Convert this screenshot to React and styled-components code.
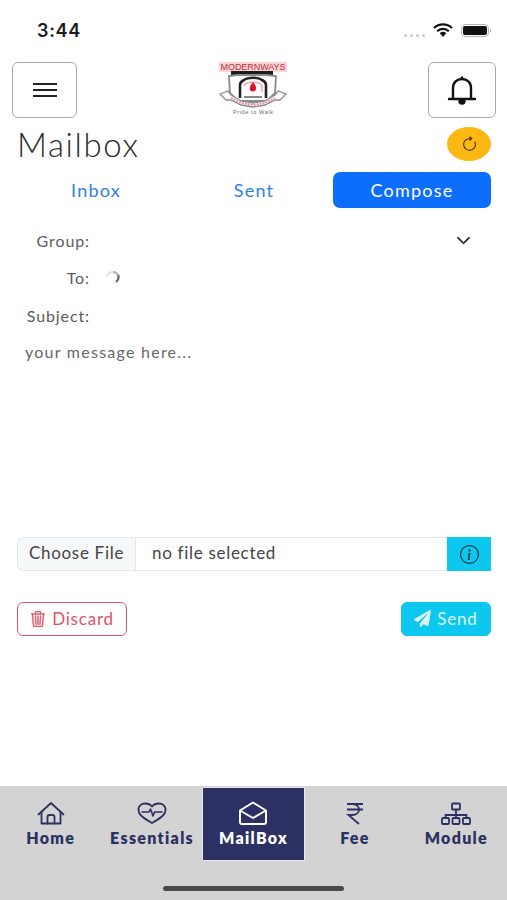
import styled, { createGlobalStyle } from "styled-components";
import { BsArrowClockwise, BsChevronDown, BsInfoCircle, BsTrash3 } from "react-icons/bs";
import { FaPaperPlane } from "react-icons/fa";

const Global = createGlobalStyle`
  html, body { margin: 0; padding: 0; background: #fff; }
  * { box-sizing: border-box; }
  body { font-family: "Lato", "Liberation Sans", sans-serif; }
`

const Page = styled.div`
  width: 507px;
  height: 900px;
  display: flex;
  flex-direction: column;
  overflow: hidden;
  background: #fff;
`

const StatusBar = styled.div`
  height: 50px;
  padding: 10px 15px 0 37px;
  display: flex;
  align-items: center;
  justify-content: space-between;
`

const Time = styled.span`
  font-family: "Inter", sans-serif;
  font-size: 18px;
  font-weight: 600;
  letter-spacing: 0.7px;
  color: #1b1b1b;
`

const StatusIcons = styled.div`
  display: flex;
  align-items: center;
  gap: 8px;
`

const Dots = styled.div`
  display: flex;
  gap: 3px;
  margin-top: 10px;

  span {
    width: 3px;
    height: 3px;
    border-radius: 50%;
    background: #c9c9c9;
  }
`

const Header = styled.header`
  margin-top: 12px;
  height: 56px;
  padding: 0 11px 0 12px;
  display: flex;
  align-items: center;
  justify-content: space-between;

  > svg {
    margin-top: -3px;
  }
`

const SquareButton = styled.button`
  width: ${(p) => p.$w}px;
  height: 56px;
  padding: 0;
  display: flex;
  align-items: center;
  justify-content: center;
  background: #fff;
  border: 1.5px solid #a9a9a9;
  border-radius: 6px;
  color: #111;
`

const TitleRow = styled.div`
  height: 54px;
  padding: 9px 16px 0 17px;
  display: flex;
  align-items: flex-start;
  justify-content: space-between;
`

const Title = styled.h1`
  margin: -2px 0 0;
  font-size: 33px;
  line-height: 38px;
  font-weight: 300;
  letter-spacing: 1.6px;
  color: #2b2b2b;
`

const RefreshButton = styled.button`
  width: 44px;
  height: 34px;
  padding: 0;
  border: 0;
  border-radius: 50%;
  display: flex;
  align-items: center;
  justify-content: center;
  background: #fdb813;
  color: #3a3320;
`

const Tabs = styled.nav`
  padding: 0 16px 0 17px;
  display: grid;
  grid-template-columns: repeat(3, 158px);
`

const Tab = styled.div`
  height: 36px;
  display: flex;
  align-items: center;
  justify-content: center;
  font-size: 18px;
  letter-spacing: 1.2px;
  border-radius: 7px;
  color: ${(p) => (p.$active ? "#fff" : "#2f80e8")};
  background: ${(p) => (p.$active ? "#0d6efd" : "transparent")};
`

const Form = styled.form`
  padding: 14px 36px 0 0;
  display: flex;
  flex-direction: column;
  height: 329px;
`

const Row = styled.div`
  height: 37.5px;
  padding-bottom: 1.500px;
  display: flex;
  align-items: center;
  justify-content: ${(p) => (p.$spread ? "space-between" : "flex-start")};
  gap: 15px;
  color: #5c5c5c;
  font-size: 16px;
  letter-spacing: 0.9px;
`

const Label = styled.label`
  width: 90px;
  text-align: right;
`

const Message = styled.div`
  padding: 7px 0 0 25px;
  font-size: 16px;
  letter-spacing: 1.25px;
  color: #666;
`

const FileRow = styled.div`
  margin: 0 16px 0 17px;
  height: 34px;
  display: flex;
  border: 1px solid #e4e6e9;
  border-right: 0;
  border-radius: 6px 0 0 6px;
  font-size: 17px;
  letter-spacing: 0.7px;
  color: #444;
`

const ChooseFile = styled.div`
  width: 118px;
  padding-bottom: 3px;
  display: flex;
  align-items: center;
  justify-content: center;
  background: #f7f8f9;
  border-right: 1px solid #e4e6e9;
  border-radius: 6px 0 0 6px;
`

const FileName = styled.div`
  flex: 1;
  padding: 0 0 3px 16px;
  display: flex;
  align-items: center;
`

const InfoButton = styled.div`
  width: 44px;
  margin: -1px 0;
  display: flex;
  align-items: center;
  justify-content: center;
  background: #0dc8ee;
  color: #0b3342;
`

const Actions = styled.div`
  margin-top: 31px;
  padding: 0 16px 0 17px;
  display: flex;
  justify-content: space-between;
`

const ActionButton = styled.button`
  height: 34px;
  width: ${(p) => p.$w}px;
  padding: 0 0 1px;
  display: flex;
  align-items: center;
  justify-content: center;
  gap: 6px;
  font-family: inherit;
  font-size: 17px;
  letter-spacing: 0.8px;
  border-radius: 6px;
  border: 1.5px solid ${(p) => (p.$danger ? "#dc5565" : "#0dc8ee")};
  color: ${(p) => (p.$danger ? "#dc5565" : "#d8f5fc")};
  background: ${(p) => (p.$danger ? "#fff" : "#0dc8ee")};
`

const Footer = styled.footer`
  margin-top: auto;
  height: 114px;
  padding: 2px 0 0;
  background: #d3d3d3;
  display: flex;
  flex-direction: column;
`

const FooterTabs = styled.div`
  display: grid;
  grid-template-columns: repeat(5, 1fr);
  height: 72px;
`

const FooterTab = styled.div`
  display: flex;
  flex-direction: column;
  align-items: center;
  padding-top: 13px;
  gap: 5px;
  font-size: 16px;
  line-height: 16px;
  font-weight: 800;
  letter-spacing: 1.3px;
  color: ${(p) => (p.$active ? "#fff" : "#2d3063")};
  background: ${(p) => (p.$active ? "#2d3063" : "transparent")};
  box-shadow: ${(p) => (p.$active ? "0 0 0 1px #e6e8f2" : "none")};
`

const HomeBar = styled.div`
  width: 181px;
  height: 5px;
  margin: 26px auto 0;
  border-radius: 3px;
  background: #4a4a4a;
`

const Wifi = () => (
  <svg width="20" height="14" viewBox="0 0 20 14" fill="none" stroke="#111" strokeWidth="2.2">
    <path d="M1 5a13 13 0 0 1 18 0" />
    <path d="M4.2 8.2a8.500 8.500 0 0 1 11.600 0" />
    <path d="M7.400 11a4 4 0 0 1 5.200 0" />
    <path d="M10 14l-2-2.400a3 3 0 0 1 4 0z" fill="#111" stroke="none" />
  </svg>
)

const Battery = () => (
  <svg width="31" height="13" viewBox="0 0 31 13">
    <rect x="0.5" y="0.5" width="27" height="12" rx="3.500" fill="none" stroke="#b5b5b5" />
    <rect x="2" y="2" width="24" height="9" rx="2" fill="#111" />
    <path d="M29 4.500a2.200 2.200 0 0 1 0 4z" fill="#b5b5b5" />
  </svg>
)

const Burger = () => (
  <svg width="26" height="16" viewBox="0 0 26 16" stroke="#222" strokeWidth="2">
    <path d="M1 2h24M1 8h24M1 14h24" />
  </svg>
)

const Bell = () => (
  <svg width="30" height="30" viewBox="0 0 30 30" fill="none" stroke="#111" strokeWidth="2.400" strokeLinejoin="round">
    <path d="M15 1.500v2.500" />
    <path d="M6 23V13c0-5.500 4-9 9-9s9 3.500 9 9v10" />
    <path d="M2 24h26" strokeLinecap="round" />
    <path d="M11.500 25a3.500 3.500 0 0 0 7 0z" fill="#111" stroke="none" />
    <path d="M12.500 26a2.500 2.500 0 0 0 5 0" />
  </svg>
)

const Logo = () => (
  <svg width="70" height="56" viewBox="0 0 70 56">
    <rect x="1" y="1" width="68" height="10" fill="#fbd3d7" />
    <text x="35" y="9.300" textAnchor="middle" fontFamily="Liberation Sans, sans-serif" fontSize="9" fill="#b8323f" textLength="65">MODERNWAYS</text>
    <rect x="13" y="10" width="42" height="4" fill="#1c1c1c" />
    <path d="M11 15l8-1h30l9 1-1 17-8 8H20l-8-8z" fill="#fff" stroke="#8a8a8a" strokeWidth="1.800" />
    <path d="M22 37V24c0-3 2-4 4-5 4-3 14-3 18 0 2 1 4 2 4 5v13" fill="#fff" stroke="#222" strokeWidth="2.600" />
    <path d="M26 25c1-5 17-5 18 0v6" fill="none" stroke="#e9a6ad" strokeWidth="1.500" />
    <path d="M35 21c2 3 3.200 4.400 3.200 6.200a3.200 3.200 0 0 1-6.400 0c0-1.800 1.200-3.200 3.200-6.200z" fill="#d9131f" />
    <path d="M26 36h18" stroke="#555" strokeWidth="1.400" />
    <path d="M2 33l8-3 3 4 10 6 12 2 12-2 10-6 3-4 8 3-6 6-5 0-10 5-12 2-12-2-10-5-5 0z" fill="#fff" stroke="#8a8a8a" strokeWidth="1.300" />
    <path d="M13 37l10 5 12 2 12-2 10-5" fill="none" stroke="#e58c96" strokeWidth="1.800" strokeDasharray="2 1" />
    <text x="35" y="53" textAnchor="middle" fontFamily="Liberation Sans, sans-serif" fontSize="5.500" fill="#666" textLength="40">Pride to Walk</text>
  </svg>
)

const Spinner = () => (
  <svg width="16" height="16" viewBox="0 0 16 16" fill="none" strokeWidth="2.400">
    <path d="M2 7a6 6 0 0 1 6-5" stroke="#e6e6e6" />
    <path d="M8 2a6 6 0 0 1 5 3" stroke="#bdbdbd" />
    <path d="M13 5a6 6 0 0 1-2 7" stroke="#6e6e6e" />
  </svg>
)

const HomeIcon = () => (
  <svg width="28" height="24" viewBox="0 0 28 24" fill="none" stroke="currentColor" strokeWidth="1.800" strokeLinecap="round" strokeLinejoin="round">
    <path d="M1.500 13.500L14 2l12.500 11.500" />
    <path d="M4.500 11v11.500h19V11" />
    <path d="M10.500 22.500V16a2 2 0 0 1 2-2h3a2 2 0 0 1 2 2v6.500" />
  </svg>
)

const HeartIcon = () => (
  <svg width="30" height="24" viewBox="0 0 30 24" fill="none" stroke="currentColor" strokeLinecap="round" strokeLinejoin="round">
    <path strokeWidth="1.800" d="M3.500 14C2 12.500 1.500 10.500 1.500 8.500 1.500 5 4.500 2.500 8 2.500c3 0 5.500 1 7 3 1.500-2 4-3 7-3 3.500 0 6.500 2.500 6.500 6 0 2-.5 4-2 5.500-3.500 3.500-8 6-11.500 8-3.500-2-8-4.500-11.500-8z" />
    <path strokeWidth="1.600" d="M5 11h7l1.500-3 2.500 7 1.500-4h7.500" />
  </svg>
)

const MailIcon = () => (
  <svg width="30" height="24" viewBox="0 0 30 24" fill="none" stroke="currentColor" strokeWidth="2" strokeLinejoin="round">
    <path d="M2 9.500L15 1.500l13 8V21a2 2 0 0 1-2 2H4a2 2 0 0 1-2-2z" />
    <path d="M2 9.500L15 17l13-7.500" />
  </svg>
)

const RupeeIcon = () => (
  <svg width="20" height="24" viewBox="0 0 20 24" fill="none" stroke="currentColor" strokeWidth="1.800">
    <path d="M2 3h16M2 8.500h16" />
    <path d="M2 3h5c4.500 0 7 2.500 7 5.500S11.500 14 7 14H3.500L14 23" />
  </svg>
)

const ModuleIcon = () => (
  <svg width="32" height="24" viewBox="0 0 32 24" fill="none" stroke="currentColor" strokeWidth="1.800">
    <rect x="12" y="2.500" width="8" height="6" rx="1" />
    <path d="M16 8.500V17M5.500 17v-3h21v3" />
    <rect x="2" y="17" width="7" height="6" rx="1" />
    <rect x="12.500" y="17" width="7" height="6" rx="1" />
    <rect x="23" y="17" width="7" height="6" rx="1" />
  </svg>
)

const navItems = [
  { label: "Home", Icon: HomeIcon },
  { label: "Essentials", Icon: HeartIcon },
  { label: "MailBox", Icon: MailIcon, active: true },
  { label: "Fee", Icon: RupeeIcon },
  { label: "Module", Icon: ModuleIcon },
];

function App() {
  return (
    <Page>
      <Global />
      <StatusBar>
        <Time>3:44</Time>
        <StatusIcons>
          <Dots><span /><span /><span /><span /></Dots>
          <Wifi />
          <Battery />
        </StatusIcons>
      </StatusBar>

      <Header>
        <SquareButton $w={65}><Burger /></SquareButton>
        <Logo />
        <SquareButton $w={68}><Bell /></SquareButton>
      </Header>

      <TitleRow>
        <Title>Mailbox</Title>
        <RefreshButton><BsArrowClockwise size={17} /></RefreshButton>
      </TitleRow>

      <Tabs>
        <Tab>Inbox</Tab>
        <Tab>Sent</Tab>
        <Tab $active>Compose</Tab>
      </Tabs>

      <Form>
        <Row $spread>
          <Label>Group:</Label>
          <BsChevronDown size={15} color="#222" stroke="#222" strokeWidth={1} />
        </Row>
        <Row>
          <Label>To:</Label>
          <Spinner />
        </Row>
        <Row>
          <Label>Subject:</Label>
        </Row>
        <Message>your message here...</Message>
      </Form>

      <FileRow>
        <ChooseFile>Choose File</ChooseFile>
        <FileName>no file selected</FileName>
        <InfoButton><BsInfoCircle size={19} /></InfoButton>
      </FileRow>

      <Actions>
        <ActionButton $danger $w={110}><BsTrash3 size={16} stroke="#dc5565" strokeWidth={0.4} />Discard</ActionButton>
        <ActionButton $w={90}><FaPaperPlane size={17} />Send</ActionButton>
      </Actions>

      <Footer>
        <FooterTabs>
          {navItems.map(({ label, Icon, active }) => (
            <FooterTab key={label} $active={active}>
              <Icon />
              {label}
            </FooterTab>
          ))}
        </FooterTabs>
        <HomeBar />
      </Footer>
    </Page>
  );
}

export default App
